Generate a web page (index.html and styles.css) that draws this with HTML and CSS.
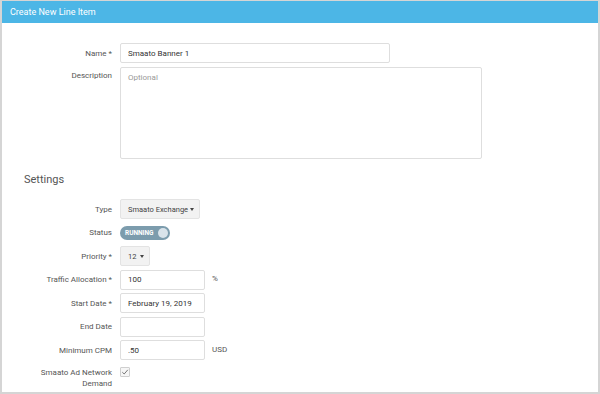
FILE: index.html
```html
<!DOCTYPE html>
<html lang="en">
  <head>
    <meta charset="UTF-8" />
    <title>Create New Line Item</title>
    <link rel="stylesheet" href="styles.css">
  </head>
  <body>
    <div class="panel">
      <div class="panel-header">Create New Line Item</div>

      <div class="form basics">
        <label class="label">Name *</label>
        <div class="field"><input class="input name" type="text" value="Smaato Banner 1" /></div>

        <label class="label label-top">Description</label>
        <div class="field field-area"><textarea class="input desc" placeholder="Optional"></textarea></div>
      </div>

      <h2 class="section-title">Settings</h2>

      <div class="form settings">
        <label class="label">Type</label>
        <div class="field">
          <div class="select type-select"><span>Smaato Exchange</span><span class="caret"></span></div>
        </div>

        <label class="label">Status</label>
        <div class="field">
          <div class="toggle"><span>RUNNING</span><span class="knob"></span></div>
        </div>

        <label class="label">Priority *</label>
        <div class="field">
          <div class="select prio-select"><span>12</span><span class="caret"></span></div>
        </div>

        <label class="label">Traffic Allocation *</label>
        <div class="field">
          <input class="input short" type="text" value="100" />
          <span class="unit">%</span>
        </div>

        <label class="label">Start Date *</label>
        <div class="field"><input class="input short" type="text" value="February 19, 2019" /></div>

        <label class="label">End Date</label>
        <div class="field"><input class="input short" type="text" value="" /></div>

        <label class="label">Minimum CPM</label>
        <div class="field">
          <input class="input short" type="text" value=".50" />
          <span class="unit">USD</span>
        </div>

        <label class="label label-top">Smaato Ad Network Demand</label>
        <div class="field field-top">
          <span class="checkbox">
            <svg width="8" height="8" viewBox="0 0 8 8"><path d="M1.3 4.2 L3.2 6 L6.8 1.8" fill="none" stroke="#777" stroke-width="1"/></svg>
          </span>
        </div>
      </div>
    </div>
  </body>
</html>
```

FILE: styles.css
```css
* {
  box-sizing: border-box;
}

body {
  margin: 0;
  font-family: Roboto, "Liberation Sans", sans-serif;
  color: #555;
  background: #fff;
}

.panel {
  width: 600px;
  height: 394px;
  border: 2px solid #d5d5d5;
  border-top-width: 1px;
  overflow: hidden;
  background: #fff;
}

.panel-header {
  height: 22px;
  line-height: 22px;
  padding-left: 8px;
  background-color: #4cb6e6;
  color: #fff;
  font-size: 9px;
}

.form {
  display: grid;
  grid-template-columns: 110px 1fr;
  column-gap: 8px;
  align-items: center;
}

.basics {
  margin-top: 20px;
  row-gap: 4px;
}

.settings {
  row-gap: 3.5px;
}

.label {
  padding-left: 36px;
  text-align: right;
  font-size: 8px;
  line-height: 11px;
  color: #555;
}

.label-top {
  align-self: start;
  padding-top: 3px;
}

.field {
  display: flex;
  align-items: center;
  height: 20px;
}

.field-area {
  height: auto;
}

.field-top {
  align-self: start;
  height: auto;
  padding-top: 3px;
}

.input {
  font-family: inherit;
  font-size: 8px;
  color: #333;
  border: 1px solid #dedede;
  border-radius: 2px;
  padding: 0 7px;
  height: 20px;
  outline: none;
  background: #fff;
}

.name {
  width: 270px;
}

.desc {
  display: block;
  width: 362px;
  height: 92px;
  resize: none;
  padding-top: 4px;
  line-height: 11px;
}

.desc::placeholder {
  color: #999;
}

.short {
  width: 85px;
}

.unit {
  margin-left: 7px;
  font-size: 8px;
  color: #555;
  margin-top: -2px;
}

.section-title {
  margin: 14px 0 13px 22px;
  font-size: 11px;
  line-height: 13px;
  font-weight: 400;
  color: #555;
}

.select {
  display: flex;
  align-items: center;
  height: 20px;
  padding: 0 5px 0 7px;
  background: #f2f2f2;
  border: 1px solid #e3e3e3;
  border-radius: 2px;
  font-size: 7.5px;
  color: #444;
  white-space: nowrap;
}

.type-select {
  width: 80px;
}

.prio-select {
  width: 30px;
}

.caret {
  margin-left: auto;
  width: 0;
  height: 0;
  border-left: 2.5px solid transparent;
  border-right: 2.5px solid transparent;
  border-top: 3px solid #444;
}

.toggle {
  display: flex;
  align-items: center;
  width: 50px;
  height: 14px;
  padding: 0 2px 0 5px;
  border-radius: 7px;
  background: #7c9cad;
  color: #fff;
  font-size: 6.5px;
  font-weight: 700;
}

.knob {
  margin-left: auto;
  width: 10px;
  height: 10px;
  border-radius: 50%;
  background: #d9e3ea;
}

.checkbox {
  display: flex;
  align-items: center;
  justify-content: center;
  width: 10px;
  height: 10px;
  border: 1px solid #cfcfcf;
  border-radius: 1px;
  background: #f6f6f6;
}
```
